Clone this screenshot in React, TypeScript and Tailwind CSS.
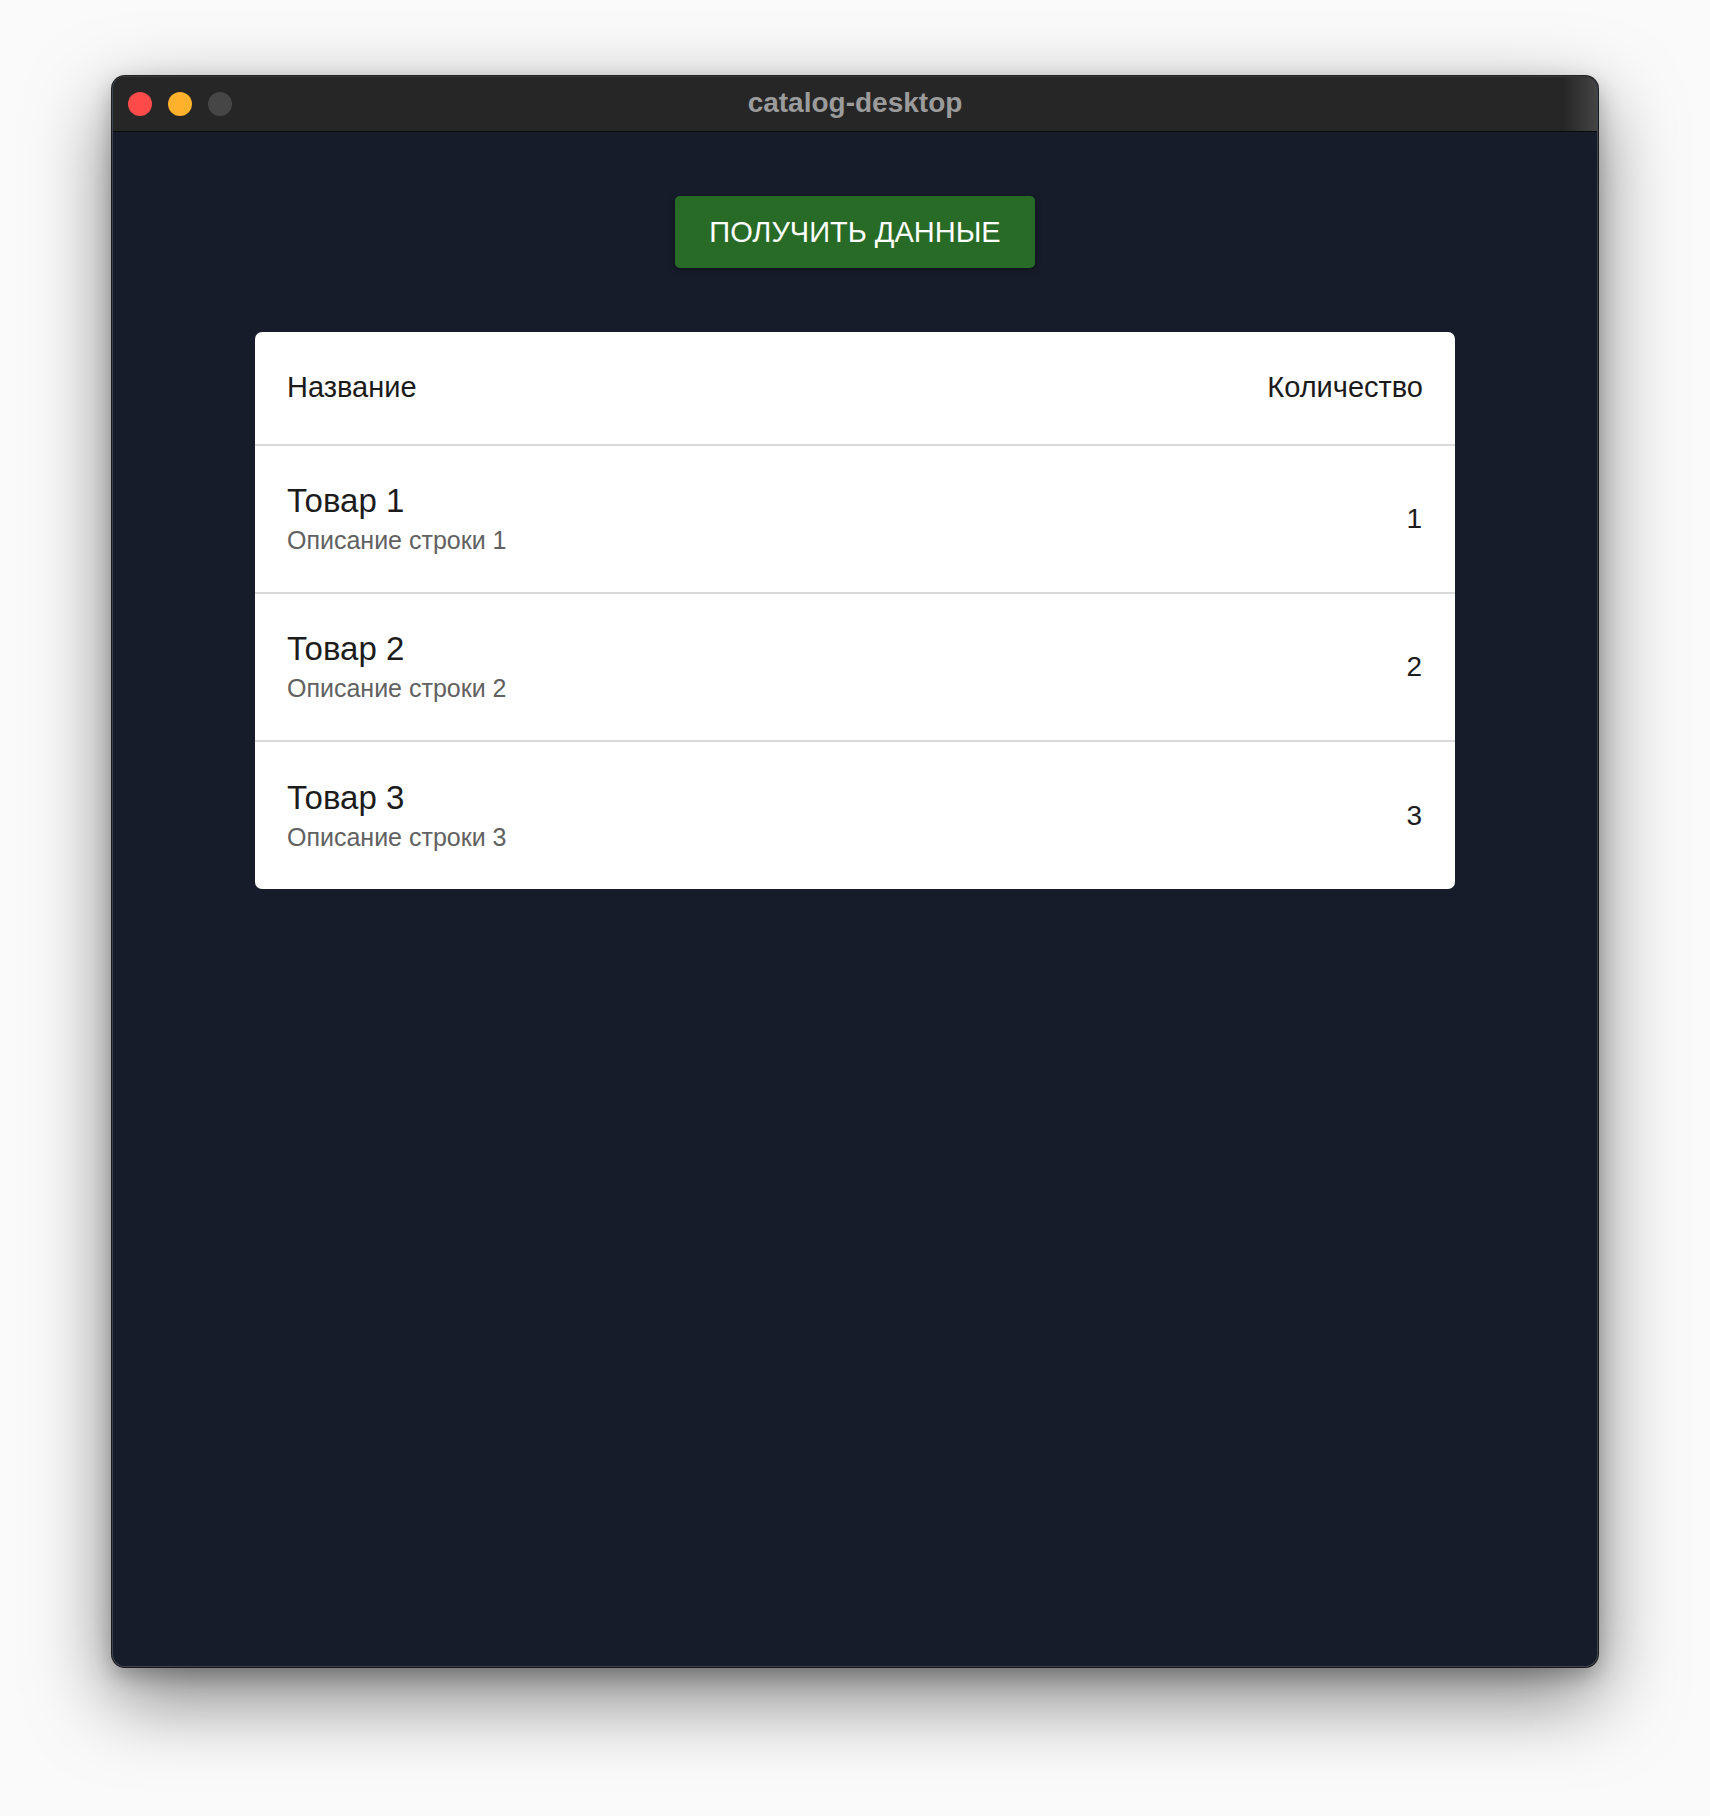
import React from "react";

const rows = [
  { name: "Товар 1", desc: "Описание строки 1", qty: 1 },
  { name: "Товар 2", desc: "Описание строки 2", qty: 2 },
  { name: "Товар 3", desc: "Описание строки 3", qty: 3 },
];

export default function App() {
  return (
    <div
      className="w-full h-[1816px] bg-[#fafafa] pt-[76px] pl-[112px]"
      style={{ fontFamily: '"Liberation Sans", Arial, sans-serif' }}
    >
      <div className="w-[1486px] h-[1591px] rounded-[13px] overflow-hidden flex flex-col bg-[#161c2a] border border-[#3f4550] border-t-[#3a3a3a] shadow-[0_0_0_1px_rgba(0,0,0,0.85),0_30px_80px_rgba(0,0,0,0.5),0_8px_22px_rgba(0,0,0,0.25)]">
        {/* Title bar */}
        <div className="h-[55px] shrink-0 grid grid-cols-[1fr_auto_1fr] items-center border-b border-[#0b0b0b] bg-[linear-gradient(to_right,#262626_calc(100%-34px),#444444)]">
          <div className="flex items-center gap-[16px] pl-[15px]">
            <span className="block w-[24px] h-[24px] rounded-full bg-[#fe4a48]" />
            <span className="block w-[24px] h-[24px] rounded-full bg-[#feb12a]" />
            <span className="block w-[24px] h-[24px] rounded-full bg-[#464646]" />
          </div>
          <div className="text-[28px] font-bold text-[#9b9b9b] leading-none pb-[2px]">
            catalog-desktop
          </div>
          <div />
        </div>

        {/* Content */}
        <div className="flex-1 flex flex-col items-center pt-[64px]">
          <button className="w-[360px] h-[72px] rounded-[5px] bg-[#286b26] text-white text-[29px] leading-none uppercase shadow-[0_2px_6px_rgba(0,0,0,0.35)]">
            Получить данные
          </button>

          <div className="mt-[64px] w-[1200px] bg-white rounded-[7px] overflow-hidden">
            <div className="h-[114px] flex items-center justify-between px-[32px] border-b-2 border-[#dadada] text-[29px] text-[#1a1a1a]">
              <span>Название</span>
              <span>Количество</span>
            </div>
            {rows.map((r, i) => (
              <div
                key={r.name}
                className={
                  i < rows.length - 1
                    ? "h-[148px] flex items-center justify-between px-[32px] border-b-2 border-[#dadada]"
                    : "h-[147px] flex items-center justify-between px-[32px]"
                }
              >
                <div className="flex flex-col mb-[5px]">
                  <span className="text-[33px] leading-[47px] text-[#1c1c1c]">{r.name}</span>
                  <span className="text-[25px] leading-[32px] text-[#616161]">{r.desc}</span>
                </div>
                <span className="text-[28px] text-[#1c1c1c] mr-[1px]">{r.qty}</span>
              </div>
            ))}
          </div>
        </div>
      </div>
    </div>
  );
}
